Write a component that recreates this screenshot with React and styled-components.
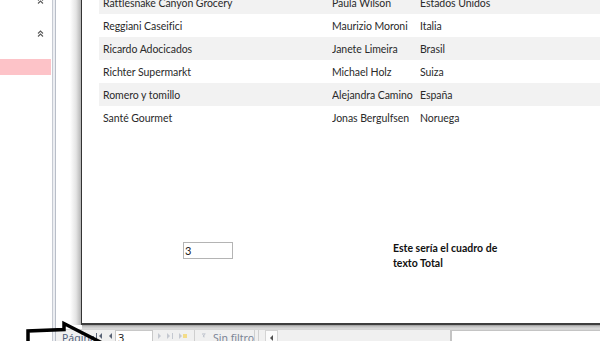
import React from "react";
import styled, { createGlobalStyle } from "styled-components";

const Global = createGlobalStyle`
  html, body { margin: 0; padding: 0; background: #ffffff; }
  body { font-family: Lato, "Noto Sans", sans-serif; }
  * { box-sizing: border-box; }
`;

const Root = styled.div`
  position: relative;
  width: 600px;
  height: 341px;
  overflow: hidden;
  display: flex;
  background: #ffffff;
`;

const NavPane = styled.div`
  width: 52px;
  flex: none;
  display: flex;
  flex-direction: column;
  background: #ffffff;
`;

const ChevronBtn = styled.div`
  height: ${(p) => p.$h}px;
  margin-top: ${(p) => p.$top}px;
  display: flex;
  justify-content: flex-end;
  padding-right: 8px;
`;

const PinkItem = styled.div`
  margin-top: ${(p) => p.$top}px;
  width: 51px;
  height: 16px;
  background: #fdc3c8;
`;

const PaneBorder = styled.div`
  width: 4px;
  flex: none;
  border-left: 1px solid #c6cad2;
  border-right: 1px solid #b9bec8;
  background: #eceef2;
`;

const Main = styled.div`
  flex: 1;
  display: flex;
  flex-direction: column;
  min-width: 0;
`;

const Workspace = styled.div`
  height: 329px;
  flex: none;
  display: flex;
  flex-direction: column;
  background: #ffffff;
  padding-left: 14px;
`;

const PageRow = styled.div`
  height: 325px;
  display: flex;
`;

const ShadowLeft = styled.div`
  width: 11px;
  flex: none;
  background: linear-gradient(to right, #ffffff 0%, #e4e4e4 55%, #b4b4b4 100%);
`;

const Page = styled.div`
  flex: 1;
  min-width: 0;
  background: #ffffff;
  border-left: 1px solid #333333;
  border-bottom: 2px solid #3e3e3e;
  padding-left: 17px;
  display: flex;
  flex-direction: column;
  overflow: hidden;
`;

const ShadowBottom = styled.div`
  height: 4px;
  margin-left: 12px;
  background: linear-gradient(to bottom, #9a9a9a 0%, #c4c4c4 40%, #dedede 100%);
`;

const Table = styled.div`
  margin-top: -9px;
  display: flex;
  flex-direction: column;
`;

const Row = styled.div`
  height: 23px;
  display: grid;
  grid-template-columns: 229px 88px 1fr;
  align-items: center;
  padding-left: 4px;
  background: ${(p) => (p.$alt ? "#f2f2f2" : "#ffffff")};
  font-family: Lato, "Noto Sans", sans-serif;
  font-size: 10.5px;
  letter-spacing: -0.05px;
  color: #2a2a2a;
  white-space: nowrap;
`;

const Cell = styled.span`
  overflow: hidden;
`;

const Footer = styled.div`
  margin-top: 112px;
  display: flex;
  align-items: flex-start;
  padding-left: 84px;
`;

const TextBox = styled.div`
  width: 50px;
  height: 17px;
  border: 1px solid #b4b4b4;
  font-family: Lato, "Noto Sans", sans-serif;
  font-size: 11px;
  line-height: 15px;
  padding-left: 1px;
  color: #222;
  margin-top: 1px;
`;

const TotalLabel = styled.div`
  margin-left: 160px;
  width: 115px;
  font-family: Lato, "Noto Sans", sans-serif;
  font-weight: 700;
  font-size: 10.5px;
  line-height: 15px;
  color: #111;
`;

const NavBar = styled.div`
  height: 20px;
  flex: none;
  display: flex;
  align-items: flex-start;
  background: #f0f0f0;
  border-top: 1px solid #d6d6d6;
  font-family: "Noto Sans", sans-serif;
  font-size: 10.5px;
  color: #51607a;
`;

const NavLabel = styled.div`
  width: 38px;
  padding-left: 6px;
  padding-top: 1px;
  line-height: 14px;
  white-space: nowrap;
  overflow: hidden;
`;

const NavIcon = styled.div`
  width: ${(p) => p.$w}px;
  height: 14px;
  padding-top: 2px;
  display: flex;
  justify-content: center;
`;

const RecordInput = styled.div`
  width: 38px;
  height: 14px;
  background: #ffffff;
  border: 1px solid #c8c8c8;
  border-bottom: none;
  padding-left: 2px;
  line-height: 14px;
  color: #222;
  font-size: 11px;
`;

const Sep = styled.div`
  width: ${(p) => p.$w}px;
  height: 20px;
  border-right: 1px solid #cfcfcf;
`;

const FilterBtn = styled.div`
  width: 60px;
  height: 20px;
  display: flex;
  align-items: flex-start;
  gap: 7px;
  padding-left: 7px;
  padding-top: 1px;
  border-right: 1px solid #cfcfcf;
  color: #7a8494;
  line-height: 14px;
  white-space: nowrap;
  overflow: hidden;
`;

const ScrollArea = styled.div`
  width: 185px;
  height: 20px;
  margin-left: 6px;
  display: flex;
  background: #f0f0f0;
`;

const ScrollBtn = styled.div`
  width: 13px;
  height: 20px;
  border: 1px solid #d4d4d4;
  border-bottom: none;
  background: #fbfbfb;
  display: flex;
  justify-content: center;
  padding-top: 3px;
`;

const SearchBox = styled.div`
  flex: 1;
  height: 20px;
  background: #ffffff;
  border-left: 2px solid #c4c4c4;
  border-top: 1px solid #c4c4c4;
`;

const ArrowOverlay = styled.svg`
  position: absolute;
  left: 0;
  top: 300px;
  pointer-events: none;
`;

const DoubleUp = () => (
  <svg width="7" height="7" viewBox="0 0 7 7">
    <polyline points="1,3.5 3.5,1 6,3.5" fill="none" stroke="#5a5a5a" strokeWidth="1.1" />
    <polyline points="1,6.5 3.5,4 6,6.5" fill="none" stroke="#5a5a5a" strokeWidth="1.1" />
  </svg>
);

const Tri = ({ dir = "left", color = "#5a6476", bar = false, star = false }) => (
  <svg width={bar || star ? 10 : 5} height="8" viewBox={`0 0 ${bar || star ? 10 : 5} 8`}>
    {dir === "left" && bar && <rect x="1" y="1" width="1" height="6" fill={color} />}
    {dir === "left" && <polygon points={bar ? "7,1 7,7 4,4" : "4,1 4,7 1,4"} fill={color} />}
    {dir === "right" && <polygon points="1,1 1,7 4,4" fill={color} />}
    {dir === "right" && bar && <rect x="6" y="1" width="1" height="6" fill={color} />}
    {dir === "right" && star && <rect x="5" y="2" width="4" height="4" fill="#f3dc88" />}
  </svg>
);

const FilterIcon = () => (
  <svg width="8" height="9" viewBox="0 0 8 9">
    <polygon points="0.5,1 6.5,1 4,4 4,8 3,7 3,4" fill="none" stroke="#9aa3b2" strokeWidth="0.9" />
  </svg>
);

const rows = [
  ["Rattlesnake Canyon Grocery", "Paula Wilson", "Estados Unidos"],
  ["Reggiani Caseifici", "Maurizio Moroni", "Italia"],
  ["Ricardo Adocicados", "Janete Limeira", "Brasil"],
  ["Richter Supermarkt", "Michael Holz", "Suiza"],
  ["Romero y tomillo", "Alejandra Camino", "España"],
  ["Santé Gourmet", "Jonas Bergulfsen", "Noruega"],
];

export default function App() {
  return (
    <>
      <Global />
      <Root>
        <NavPane>
          <ChevronBtn $top={-3} $h={7}>
            <DoubleUp />
          </ChevronBtn>
          <ChevronBtn $top={26} $h={7}>
            <DoubleUp />
          </ChevronBtn>
          <PinkItem $top={22} />
        </NavPane>
        <PaneBorder />
        <Main>
          <Workspace>
            <PageRow>
              <ShadowLeft />
              <Page>
                <Table>
                  {rows.map((r, i) => (
                    <Row key={r[0]} $alt={i % 2 === 0}>
                      <Cell>{r[0]}</Cell>
                      <Cell>{r[1]}</Cell>
                      <Cell>{r[2]}</Cell>
                    </Row>
                  ))}
                </Table>
                <Footer>
                  <TextBox>3</TextBox>
                  <TotalLabel>Este sería el cuadro de texto Total</TotalLabel>
                </Footer>
              </Page>
            </PageRow>
            <ShadowBottom />
          </Workspace>
          <NavBar>
            <NavLabel>Página:</NavLabel>
            <NavIcon $w={12}>
              <Tri dir="left" bar />
            </NavIcon>
            <NavIcon $w={9}>
              <Tri dir="left" />
            </NavIcon>
            <RecordInput>3</RecordInput>
            <NavIcon $w={13}>
              <Tri dir="right" color="#c4c8d0" />
            </NavIcon>
            <NavIcon $w={10}>
              <Tri dir="right" color="#c4c8d0" bar />
            </NavIcon>
            <NavIcon $w={14}>
              <Tri dir="right" color="#c4c8d0" star />
            </NavIcon>
            <Sep $w={5} />
            <FilterBtn>
              <FilterIcon />
              <span>Sin filtro</span>
            </FilterBtn>
            <Sep $w={4} />
            <ScrollArea>
              <ScrollBtn>
                <Tri dir="left" color="#505050" />
              </ScrollBtn>
            </ScrollArea>
            <SearchBox />
          </NavBar>
        </Main>
        <ArrowOverlay width="120" height="41" viewBox="0 300 120 41">
          <polyline
            points="28,345 28,331 64,329.5 64,323.5 106,345"
            fill="none"
            stroke="#000"
            strokeWidth="3.5"
            strokeLinejoin="miter"
          />
        </ArrowOverlay>
      </Root>
    </>
  );
}
